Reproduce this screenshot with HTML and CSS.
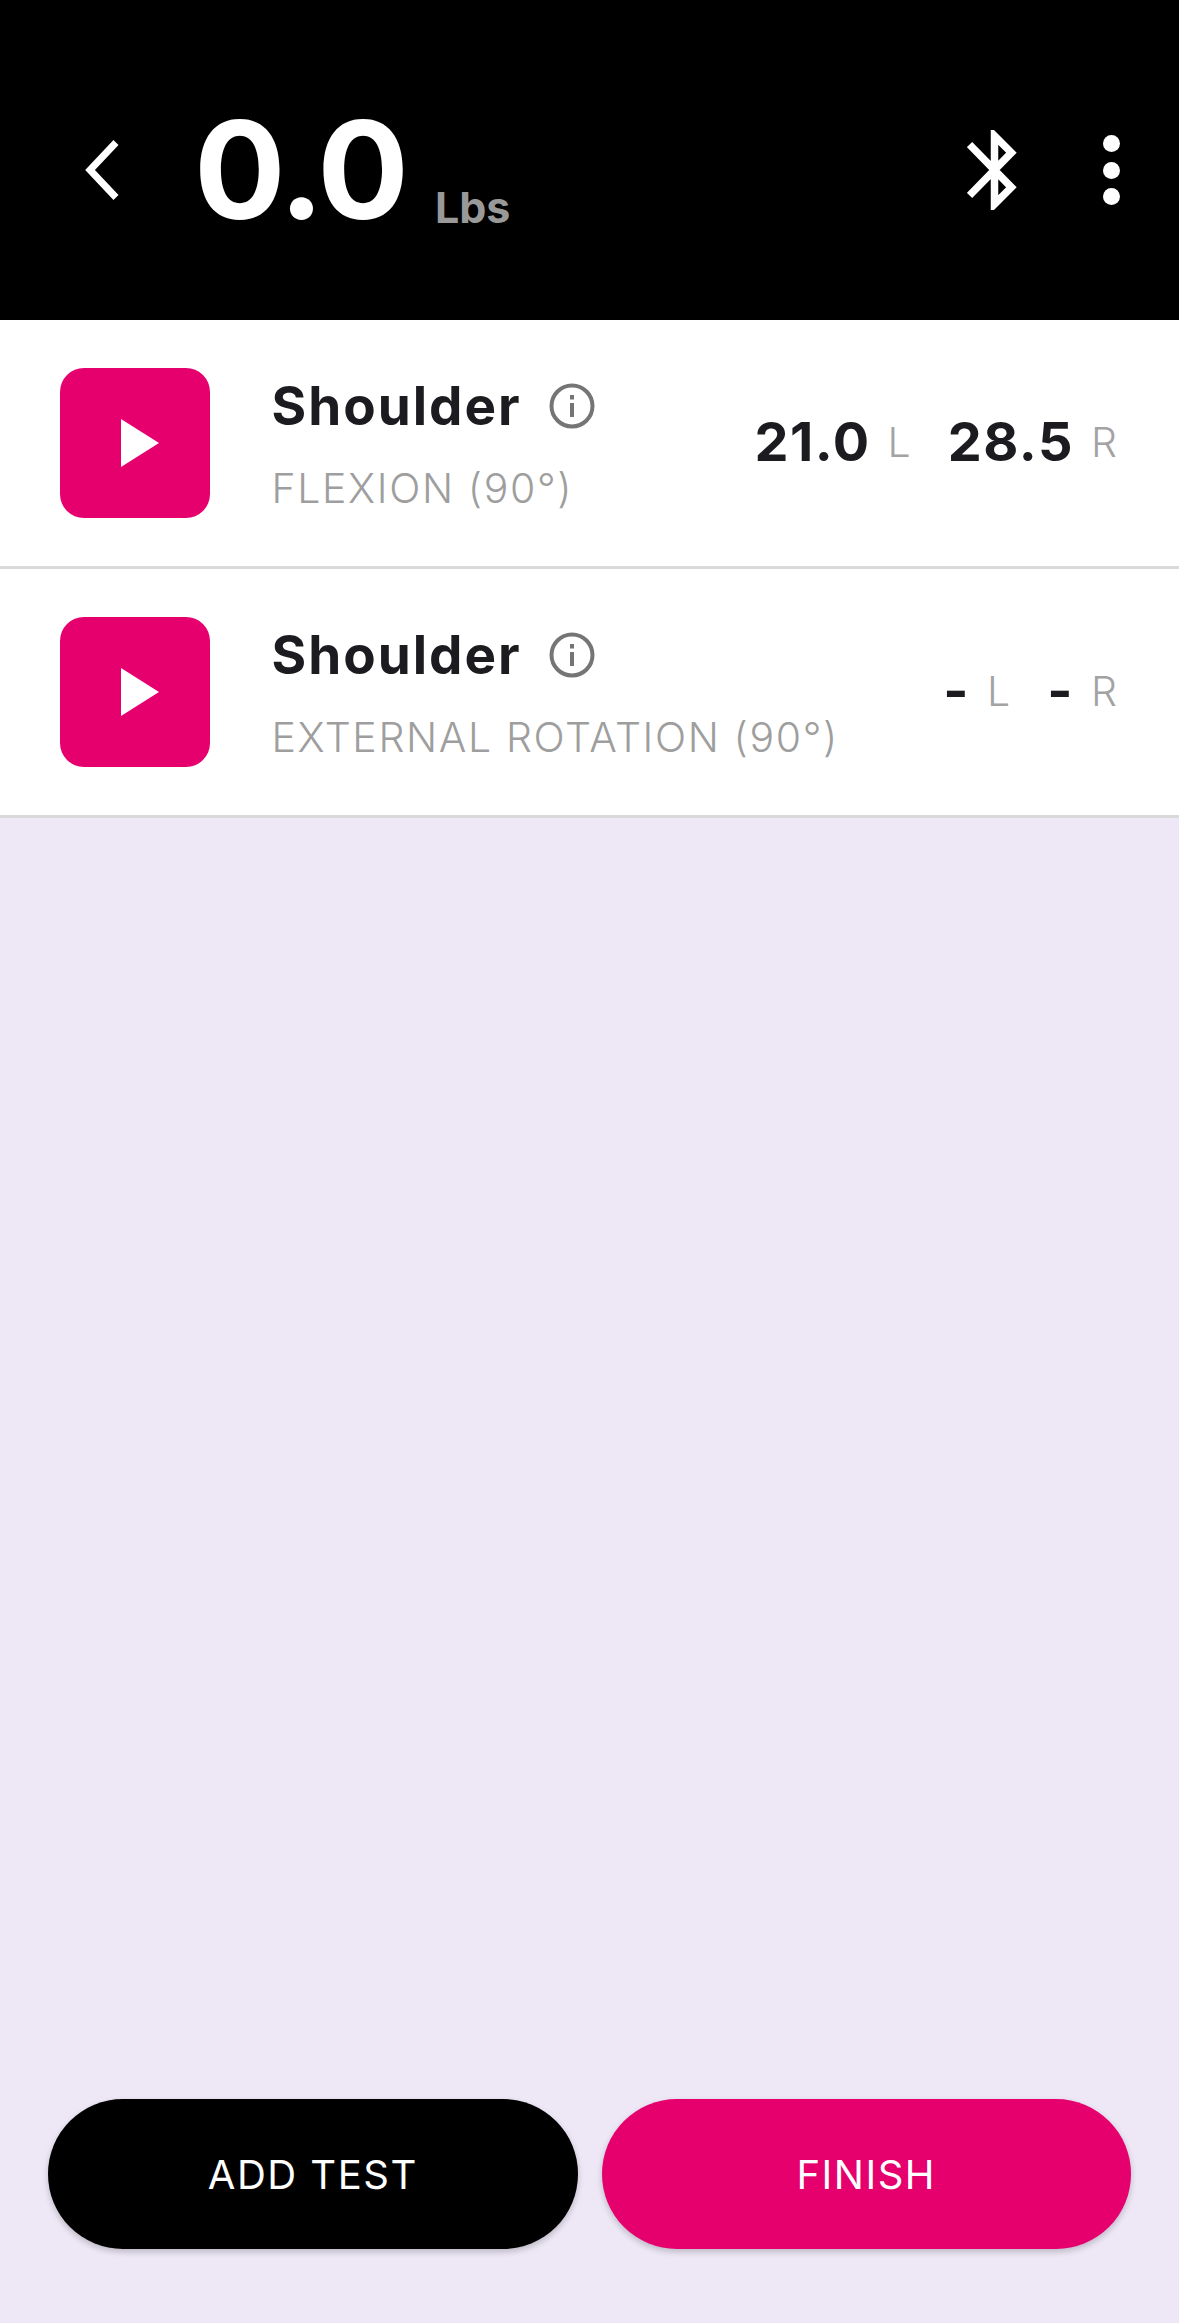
FILE: index.html
```html
<!DOCTYPE html>
<html lang="en">
<head>
  <meta charset="UTF-8">
  <meta name="viewport" content="width=device-width, initial-scale=1.0">
  <title>Strength Test</title>
  <link rel="stylesheet" href="styles.css">
</head>
<body>
  <header class="top-bar">
    <button class="icon-btn back-btn" aria-label="Back">
      <svg width="34" height="60" viewBox="0 0 34 60"><path d="M31 2.500 5 30l26 27.500" fill="none" stroke="#fff" stroke-width="7"/></svg>
    </button>
    <div class="reading">
      <span class="reading-value">0.0</span>
      <span class="reading-unit">Lbs</span>
    </div>
    <button class="icon-btn bluetooth-btn" aria-label="Bluetooth">
      <svg width="50" height="80" viewBox="0 0 50 80"><path d="M2.500 14.500 44.400 57.300 27.500 74.200V5.800L44.400 22.700 2.500 65.500" fill="none" stroke="#fff" stroke-width="7.500"/></svg>
    </button>
    <button class="icon-btn menu-btn" aria-label="Menu">
      <span class="dot"></span>
      <span class="dot"></span>
      <span class="dot"></span>
    </button>
  </header>

  <ul class="test-list">
    <li class="test-row">
      <button class="play-btn" aria-label="Play">
        <svg width="38" height="48" viewBox="0 0 38 48"><path d="M0 0 38 24 0 48Z" fill="#fff"/></svg>
      </button>
      <div class="test-info">
        <div class="test-name">
          <span>Shoulder</span>
          <svg class="info-icon" width="46" height="46" viewBox="0 0 46 46"><circle cx="23" cy="23" r="20.500" fill="none" stroke="#757575" stroke-width="4"/><rect x="21" y="12" width="4" height="4.500" fill="#757575"/><rect x="21" y="20" width="4" height="14" fill="#757575"/></svg>
        </div>
        <div class="test-type">FLEXION (90°)</div>
      </div>
      <div class="scores">
        <span class="score">21.0</span><span class="side side-l">L</span>
        <span class="score">28.5</span><span class="side">R</span>
      </div>
    </li>
    <li class="test-row">
      <button class="play-btn" aria-label="Play">
        <svg width="38" height="48" viewBox="0 0 38 48"><path d="M0 0 38 24 0 48Z" fill="#fff"/></svg>
      </button>
      <div class="test-info">
        <div class="test-name">
          <span>Shoulder</span>
          <svg class="info-icon" width="46" height="46" viewBox="0 0 46 46"><circle cx="23" cy="23" r="20.500" fill="none" stroke="#757575" stroke-width="4"/><rect x="21" y="12" width="4" height="4.500" fill="#757575"/><rect x="21" y="20" width="4" height="14" fill="#757575"/></svg>
        </div>
        <div class="test-type">EXTERNAL ROTATION (90°)</div>
      </div>
      <div class="scores">
        <span class="score">-</span><span class="side side-l">L</span>
        <span class="score">-</span><span class="side">R</span>
      </div>
    </li>
  </ul>

  <footer class="actions">
    <button class="action-btn add-btn">ADD TEST</button>
    <button class="action-btn finish-btn">FINISH</button>
  </footer>
</body>
</html>
```

FILE: styles.css
```css
* {
  box-sizing: border-box;
}

html, body {
  height: 100%;
}

body {
  margin: 0;
  display: flex;
  flex-direction: column;
  font-family: Inter, "Liberation Sans", sans-serif;
  background-color: #ede7f6;
  color: #1c1b1f;
}

button {
  padding: 0;
  border: none;
  font-family: inherit;
  background: none;
}

.top-bar {
  height: 320px;
  padding: 20px 59px 0 85px;
  display: flex;
  align-items: center;
  background-color: #000;
}

.icon-btn {
  display: flex;
}

.reading {
  margin-left: 75px;
  display: flex;
  align-items: flex-end;
  color: #fff;
}

.reading-value {
  font-size: 136px;
  line-height: 170px;
  font-weight: 700;
  letter-spacing: -3px;
}

.reading-unit {
  margin: 0 0 24px 29px;
  font-size: 43px;
  line-height: 48px;
  font-weight: 700;
  color: #999;
}

.bluetooth-btn {
  margin-left: auto;
}

.menu-btn {
  margin-left: 86.500px;
  flex-direction: column;
  gap: 9.500px;
}

.dot {
  width: 17px;
  height: 17px;
  border-radius: 50%;
  background-color: #fff;
}

.test-list {
  margin: 0;
  padding: 0;
  list-style-type: none;
}

.test-row {
  height: 249px;
  padding: 0 60px;
  display: flex;
  align-items: center;
  border-bottom: 3px solid #d9d9d9;
  background-color: #fff;
}

.play-btn {
  width: 150px;
  height: 150px;
  margin-top: -1px;
  padding-left: 10px;
  display: flex;
  align-items: center;
  justify-content: center;
  border-radius: 24px;
  background-color: #e6006e;
}

.test-info {
  margin-left: 61.500px;
}

.test-name {
  display: flex;
  align-items: center;
  gap: 27px;
  font-size: 53px;
  line-height: 64px;
  font-weight: 700;
  letter-spacing: 2px;
}

.test-type {
  margin-top: 26px;
  font-size: 41px;
  line-height: 48px;
  font-weight: 300;
  letter-spacing: 1.630px;
  color: #9e9e9e;
}

.scores {
  margin-left: auto;
  margin-right: 2px;
  margin-bottom: 2px;
  display: flex;
  align-items: center;
}

.score {
  font-size: 54px;
  line-height: 64px;
  font-weight: 700;
  letter-spacing: 1.500px;
}

.side {
  margin-left: 17px;
  font-size: 41px;
  line-height: 64px;
  font-weight: 300;
  color: #a3a3a3;
}

.side-l {
  margin-right: 37px;
}

.actions {
  margin-top: auto;
  padding: 0 48px 74px;
  display: flex;
  gap: 24px;
}

.action-btn {
  flex: 1;
  height: 150px;
  border-radius: 75px;
  font-size: 40px;
  letter-spacing: 1.500px;
  color: #fff;
  box-shadow: 0 3px 6px rgba(0, 0, 0, 0.2);
}

.add-btn {
  background-color: #000;
}

.finish-btn {
  background-color: #e6006e;
}
```
